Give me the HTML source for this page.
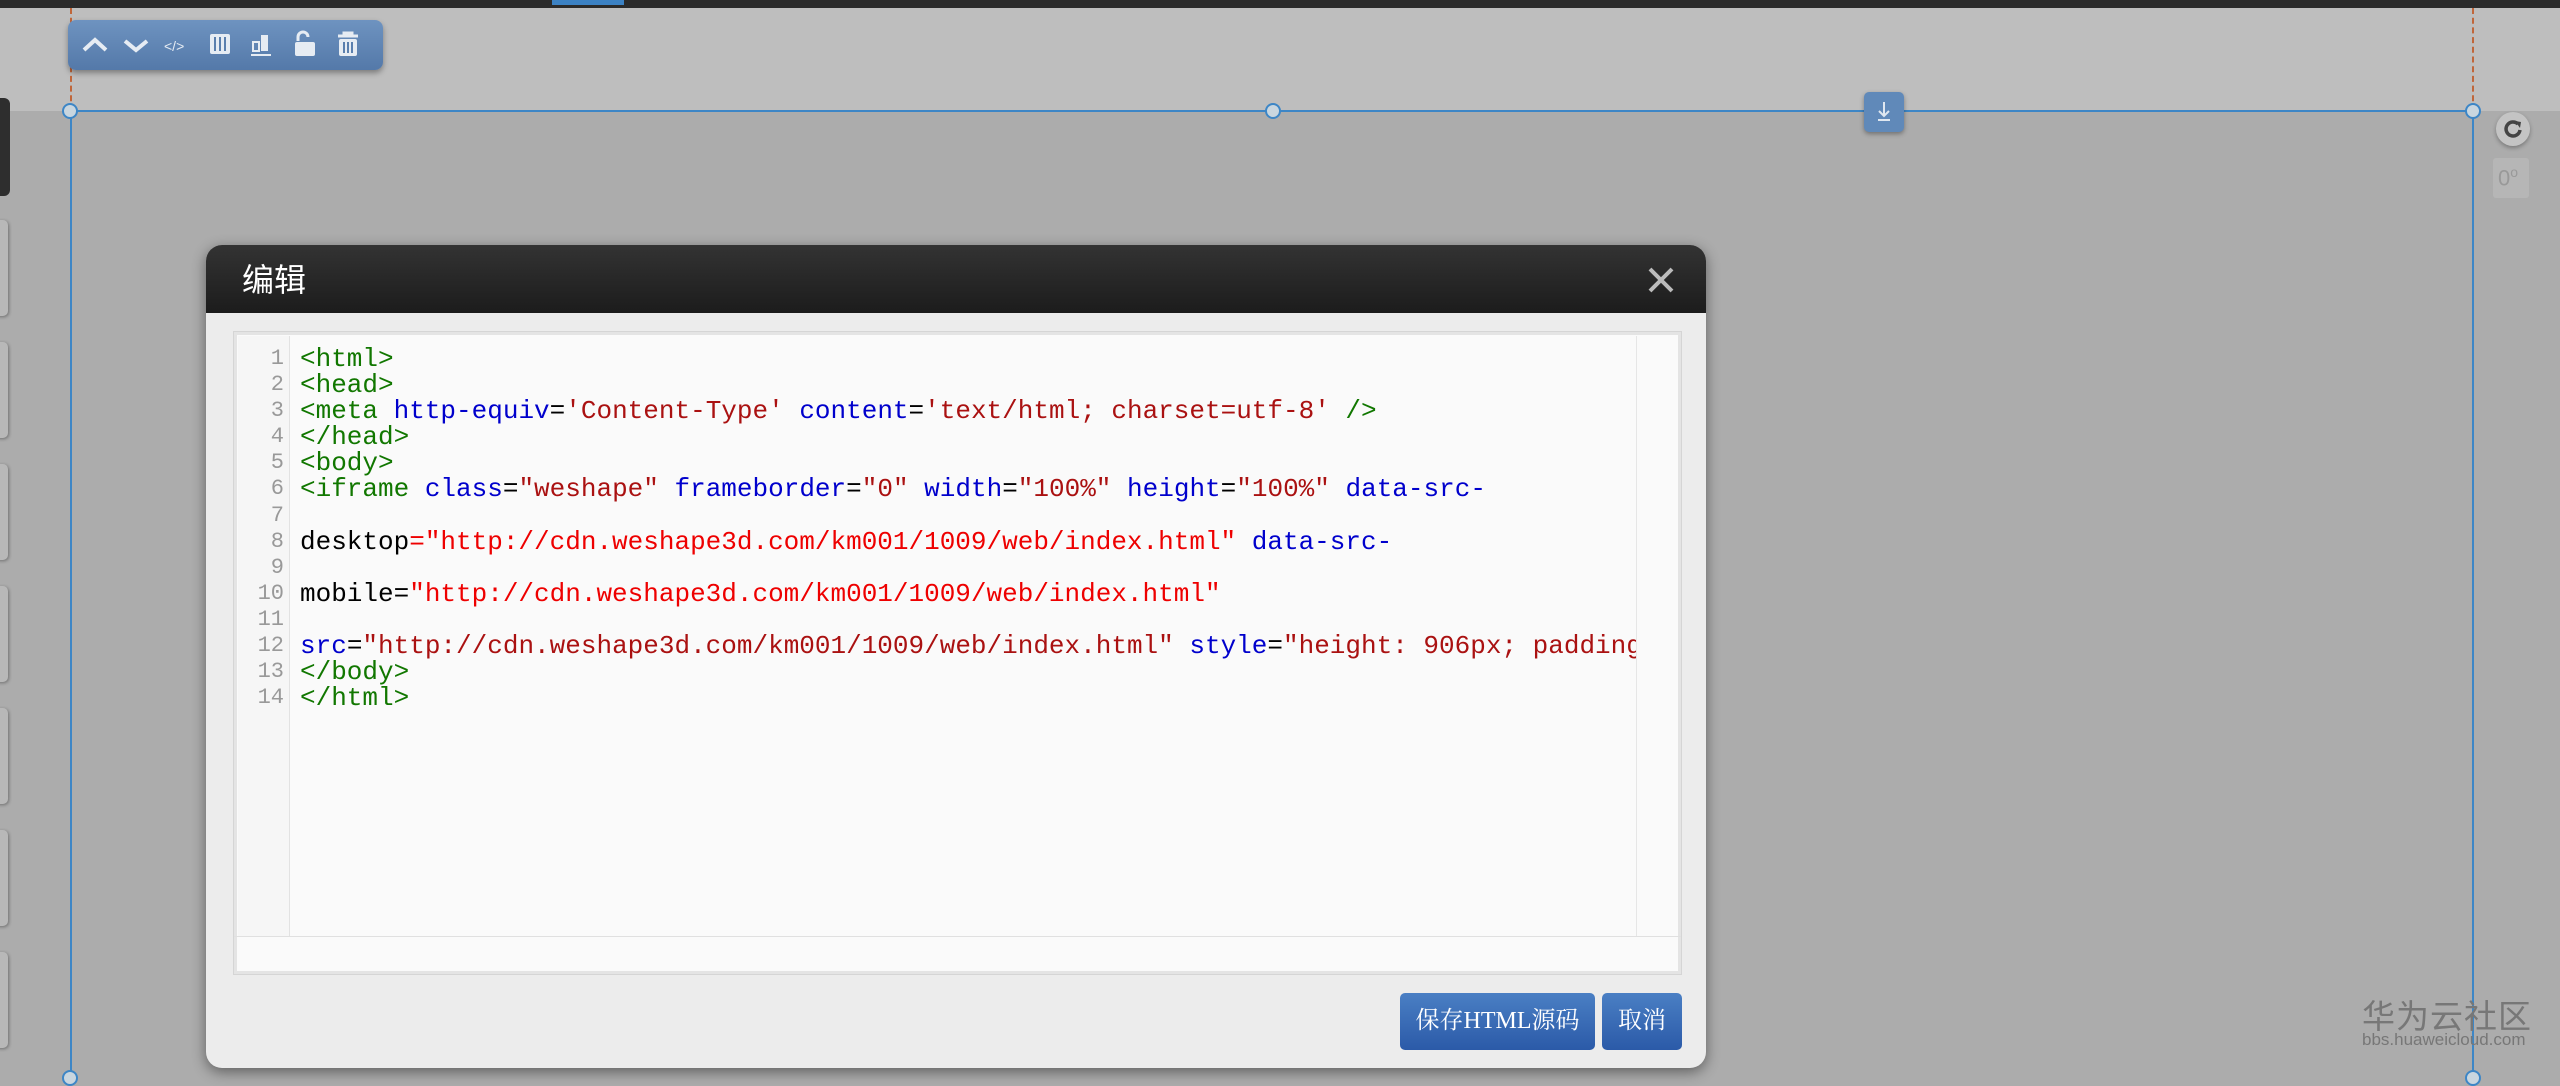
<!DOCTYPE html>
<html><head><meta charset="utf-8"><style>
*{margin:0;padding:0;box-sizing:border-box}
body{width:2560px;height:1078px;overflow:hidden;background:#acacac;position:relative;font-family:"Liberation Sans","Noto Sans CJK SC",sans-serif}
.abs{position:absolute}
#topbar{left:0;top:0;width:2560px;height:8px;background:#2b2b2b}
#toparea{left:0;top:8px;width:2560px;height:103px;background:#bebebe}
.tab{position:absolute;left:-6px;width:14px;height:96px;border-radius:5px;background:#b8b8b8;box-shadow:1px 1px 3px rgba(0,0,0,.35)}
#tb{left:68px;top:20px;width:315px;height:50px;border-radius:8px;background:linear-gradient(#6e93c0,#5479a9);box-shadow:0 3px 6px rgba(0,0,0,.35)}
.dash{width:0;border-left:2px dashed #c0663a}
.hl{background:#3d86c6}
.hd{width:16px;height:16px;border-radius:50%;border:2px solid #3d86c6;background:#c9d6df}
#dlg{left:206px;top:245px;width:1500px;height:823px;border-radius:16px;background:#ececec;box-shadow:0 4px 14px rgba(0,0,0,.45);overflow:hidden}
#hdr{height:68px;background:linear-gradient(#333,#1c1c1c);color:#fff;font-size:32px;padding:10px 0 0 36px}
#ed{left:27px;top:86px;width:1449px;height:644px;background:#fafafa;border:1px solid #d5d5d5;box-shadow:inset 0 0 0 3px #e4e4e4}
#gut{left:4px;top:4px;width:52px;height:600px;border-right:1px solid #e2e2e2;background:#f6f6f6}
#code{left:66px;top:14px;width:1337px;height:590px;overflow:hidden;font-family:"Liberation Mono",monospace;font-size:26px;line-height:26.1px;white-space:pre;color:#000}
#nums{left:0;top:14px;width:50px;text-align:right;font-family:"Liberation Mono",monospace;font-size:22px;line-height:26.1px;color:#999;white-space:pre}
.t{color:#170}.a{color:#00c}.s{color:#a11}.u{color:#e00}
.btn{position:absolute;top:748px;height:57px;border-radius:5px;background:linear-gradient(#4a7fc4,#2b5aa8);color:#fff;font-family:"Liberation Serif","Noto Serif CJK SC",serif;font-size:24px;text-align:center;line-height:57px}
</style></head><body>
<div class="abs" id="topbar"></div>
<div class="abs" style="left:552px;top:0;width:72px;height:5px;background:#3c82c4"></div>
<div class="abs" id="toparea"></div>
<div class="abs" style="left:0;top:98px;width:10px;height:98px;border-radius:0 6px 6px 0;background:#2e2e2e"></div>
<div class="tab" style="top:220px"></div><div class="tab" style="top:342px"></div><div class="tab" style="top:464px"></div><div class="tab" style="top:586px"></div><div class="tab" style="top:708px"></div><div class="tab" style="top:830px"></div><div class="tab" style="top:952px"></div>
<div class="abs dash" style="left:70px;top:8px;height:103px"></div>
<div class="abs dash" style="left:2472px;top:8px;height:103px"></div>
<div class="abs hl" style="left:70px;top:110px;width:2404px;height:2px"></div>
<div class="abs hl" style="left:70px;top:110px;width:2px;height:968px"></div>
<div class="abs hl" style="left:2472px;top:110px;width:2px;height:968px"></div>
<div class="abs hd" style="left:62px;top:103px"></div>
<div class="abs hd" style="left:1265px;top:103px"></div>
<div class="abs hd" style="left:2465px;top:103px"></div>
<div class="abs hd" style="left:62px;top:1070px"></div>
<div class="abs hd" style="left:2465px;top:1070px"></div>
<div class="abs" style="left:1864px;top:92px;width:40px;height:40px;border-radius:5px;background:#6089b9;box-shadow:0 2px 5px rgba(0,0,0,.35)">
<svg width="40" height="40"><path d="M20 10v14M15 19l5 5 5-5M14 28h12" stroke="#dfe7f0" stroke-width="2" fill="none"/></svg></div>
<div class="abs" style="left:2496px;top:112px;width:34px;height:34px;border-radius:50%;background:#c4c4c4;box-shadow:0 2px 4px rgba(0,0,0,.3)">
<svg width="34" height="34"><path d="M22 12a7 7 0 1 0 2 6" stroke="#444" stroke-width="3.5" fill="none"/><path d="M19 9l6 1-1 6z" fill="#444"/></svg></div>
<div class="abs" style="left:2493px;top:158px;width:36px;height:40px;border-radius:3px;background:#b6b6b6;color:#999;font-size:22px;padding:6px 0 0 5px">0<sup style="font-size:14px">o</sup></div>
<div class="abs" id="tb"><svg width="315" height="50" fill="none" stroke="#e6ecf3" stroke-width="4">
<path d="M16 30l11-10 11 10"/><path d="M57 21l11 9 11-9"/>
<text x="96" y="31" fill="#e6ecf3" stroke="none" font-size="14" font-family="Liberation Sans">&lt;/&gt;</text>
<rect x="142" y="14" width="20" height="20" rx="2" fill="#e6ecf3" stroke="none"/><path d="M147 17v14M152 17v14M157 17v14" stroke="#5a7fae" stroke-width="2"/>
<rect x="185" y="22" width="6" height="9" stroke-width="2"/><rect x="193" y="15" width="7" height="16" fill="#e6ecf3" stroke="none"/><path d="M183 35h20" stroke-width="2"/>
<rect x="227" y="22" width="20" height="14" rx="2" fill="#e6ecf3" stroke="none"/><path d="M230 21v-4a5 5 0 0 1 10 0" stroke-width="3"/>
<path d="M270 16h20M276 16v-3h8v3" stroke-width="3"/><rect x="271" y="19" width="18" height="17" rx="2" fill="#e6ecf3" stroke="none"/><path d="M276 22v11M280 22v11M284 22v11" stroke="#5a7fae" stroke-width="2"/>
</svg></div>
<div class="abs" id="dlg">
<div id="hdr">编辑</div>
<svg class="abs" style="left:1440px;top:20px" width="30" height="30"><path d="M4 4l22 22M26 4L4 26" stroke="#bbb" stroke-width="4"/></svg>
<div class="abs" id="ed">
<div class="abs" id="gut"></div>
<div class="abs" id="nums">1
2
3
4
5
6
7
8
9
10
11
12
13
14</div>
<div class="abs" id="code"><span class="t">&lt;html&gt;</span>
<span class="t">&lt;head&gt;</span>
<span class="t">&lt;meta</span> <span class="a">http-equiv</span>=<span class="s">'Content-Type'</span> <span class="a">content</span>=<span class="s">'text/html; charset=utf-8'</span> <span class="t">/&gt;</span>
<span class="t">&lt;/head&gt;</span>
<span class="t">&lt;body&gt;</span>
<span class="t">&lt;iframe</span> <span class="a">class</span>=<span class="s">"weshape"</span> <span class="a">frameborder</span>=<span class="s">"0"</span> <span class="a">width</span>=<span class="s">"100%"</span> <span class="a">height</span>=<span class="s">"100%"</span> <span class="a">data-src-</span>

desktop<span class="u">="http://cdn.weshape3d.com/km001/1009/web/index.html"</span> <span class="a">data-src-</span>

mobile=<span class="u">"http://cdn.weshape3d.com/km001/1009/web/index.html"</span>

<span class="a">src</span>=<span class="s">"http://cdn.weshape3d.com/km001/1009/web/index.html"</span> <span class="a">style</span>=<span class="s">"height: 906px; padding: 0px;"</span>
<span class="t">&lt;/body&gt;</span>
<span class="t">&lt;/html&gt;</span></div>
<div class="abs" style="left:0;top:604px;width:1447px;height:1px;background:#e0e0e0"></div>
<div class="abs" style="left:1402px;top:4px;width:1px;height:600px;background:#e6e6e6"></div>
</div>
<div class="btn" style="left:1194px;width:195px">保存HTML源码</div>
<div class="btn" style="left:1396px;width:80px">取消</div>
</div>
<div class="abs" style="left:2362px;top:990px;color:#777;font-size:33px;letter-spacing:1px">华为云社区</div>
<div class="abs" style="left:2362px;top:1030px;color:#777;font-size:17px">bbs.huaweicloud.com</div>
</body></html>
